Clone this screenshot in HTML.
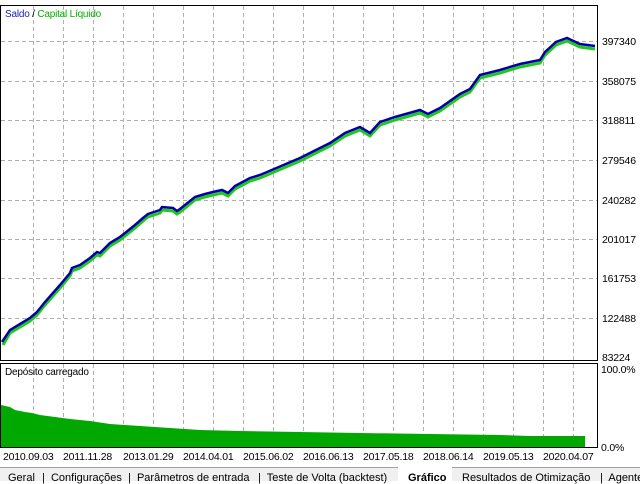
<!DOCTYPE html>
<html><head><meta charset="utf-8"><style>
body{margin:0;width:640px;height:480px;overflow:hidden;background:#fff;font-family:"Liberation Sans",sans-serif;position:relative}
.t{position:absolute;font-size:10.5px;color:#000;white-space:nowrap;letter-spacing:-0.2px}
.tabs{position:absolute;left:0;top:467px;width:640px;height:13px;background:#f0f0f0;border-top:1px solid #a0a0a0}
.tab{position:absolute;top:4px;font-size:11px;color:#000;white-space:nowrap}
</style></head><body>
<svg width="640" height="480" style="position:absolute;left:0;top:0">
<rect x="0.5" y="5.5" width="597" height="355" fill="#fff" stroke="#000"/>
<rect x="0.5" y="363.5" width="597" height="84" fill="#fff" stroke="#000"/>
<g stroke="#b0b0b0" stroke-dasharray="4,3" stroke-width="1">
<path d="M33.5 6V360M63.5 6V360M93.5 6V360M123.5 6V360M153.5 6V360M183.5 6V360M213.5 6V360M243.5 6V360M273.5 6V360M303.5 6V360M333.5 6V360M363.5 6V360M393.5 6V360M423.5 6V360M453.5 6V360M483.5 6V360M513.5 6V360M543.5 6V360M573.5 6V360"/>
<path d="M1 41.5H597M1 81.5H597M1 120.5H597M1 160.5H597M1 200.5H597M1 239.5H597M1 278.5H597M1 318.5H597"/>
<path d="M33.5 364V447M63.5 364V447M93.5 364V447M123.5 364V447M153.5 364V447M183.5 364V447M213.5 364V447M243.5 364V447M273.5 364V447M303.5 364V447M333.5 364V447M363.5 364V447M393.5 364V447M423.5 364V447M453.5 364V447M483.5 364V447M513.5 364V447M543.5 364V447M573.5 364V447"/>
</g>
<polygon fill="#00a800" points="1,405 10,407 15,410 25,412 32,413 40,415 55,417 70,419 90,421 110,424 140,426 170,428 200,430 240,431 300,432 360,433 430,434 500,435 530,436 585,436 585,447 1,447"/>
<polyline fill="none" stroke="#1fc81f" stroke-width="3" points="3,345 10,333 30,321 37,315 45,305 60,288 70,276 72,271 80,268 90,261 97,255 100,256 110,246 120,240 135,228 143,221 148,217 160,213 162,210 173,211 177,214 180,212 195,200 205,197 213,195 222,193 228,196 235,189 250,181 260,178 300,161 330,146 345,136 360,130 370,136 380,125 395,120 420,113 428,117 440,111 460,97 470,92 480,78 500,73 520,67 540,63 545,55 556,45 567,41 580,47 595,49"/>
<polyline fill="none" stroke="#0000a8" stroke-width="2.5" points="2,342 10,330 30,318 37,312 45,302 60,285 70,273 72,268 80,265 90,258 97,252 100,253 110,243 120,237 135,225 143,218 148,214 160,210 162,207 173,208 177,211 180,209 195,197 205,194 213,192 222,190 228,193 235,186 250,178 260,175 300,158 330,143 345,133 360,127 370,133 380,122 395,117 420,110 428,114 440,108 460,94 470,89 480,75 500,70 520,64 540,60 545,52 556,42 567,38 580,44 595,46"/>
</svg>
<div class="t" style="left:5px;top:9px;font-size:10px"><span style="color:#2020b0">Saldo</span> / <span style="color:#00b000">Capital Líquido</span></div>
<div class="t" style="left:5px;top:367px;font-size:10px">Depósito carregado</div>
<div class="t" style="left:602px;top:36px">397340</div>
<div class="t" style="left:602px;top:76px">358075</div>
<div class="t" style="left:602px;top:115px">318811</div>
<div class="t" style="left:602px;top:155px">279546</div>
<div class="t" style="left:602px;top:195px">240282</div>
<div class="t" style="left:602px;top:234px">201017</div>
<div class="t" style="left:602px;top:273px">161753</div>
<div class="t" style="left:602px;top:313px">122488</div>
<div class="t" style="left:602px;top:352px">83224</div>
<div class="t" style="left:601px;top:364px">100.0%</div>
<div class="t" style="left:601px;top:442px">0.0%</div>
<div class="t" style="left:3px;top:451px">2010.09.03</div>
<div class="t" style="left:63px;top:451px">2011.11.28</div>
<div class="t" style="left:123px;top:451px">2013.01.29</div>
<div class="t" style="left:183px;top:451px">2014.04.01</div>
<div class="t" style="left:243px;top:451px">2015.06.02</div>
<div class="t" style="left:303px;top:451px">2016.06.13</div>
<div class="t" style="left:363px;top:451px">2017.05.18</div>
<div class="t" style="left:423px;top:451px">2018.06.14</div>
<div class="t" style="left:483px;top:451px">2019.05.13</div>
<div class="t" style="left:543px;top:451px">2020.04.07</div>
<div class="tabs">
<div class="tab" style="left:8px">Geral</div>
<div class="tab" style="left:42px">|&nbsp; Configurações</div>
<div class="tab" style="left:128px">|&nbsp; Parâmetros de entrada</div>
<div class="tab" style="left:258px">|&nbsp; Teste de Volta (backtest)</div>
<div style="position:absolute;left:398px;top:-1px;width:54px;height:14px;background:#fff"></div>
<div class="tab" style="left:408px;font-weight:bold">Gráfico</div>
<div class="tab" style="left:462px">Resultados de Otimização</div>
<div class="tab" style="left:600px">|&nbsp; Agente</div>
</div>
</body></html>
